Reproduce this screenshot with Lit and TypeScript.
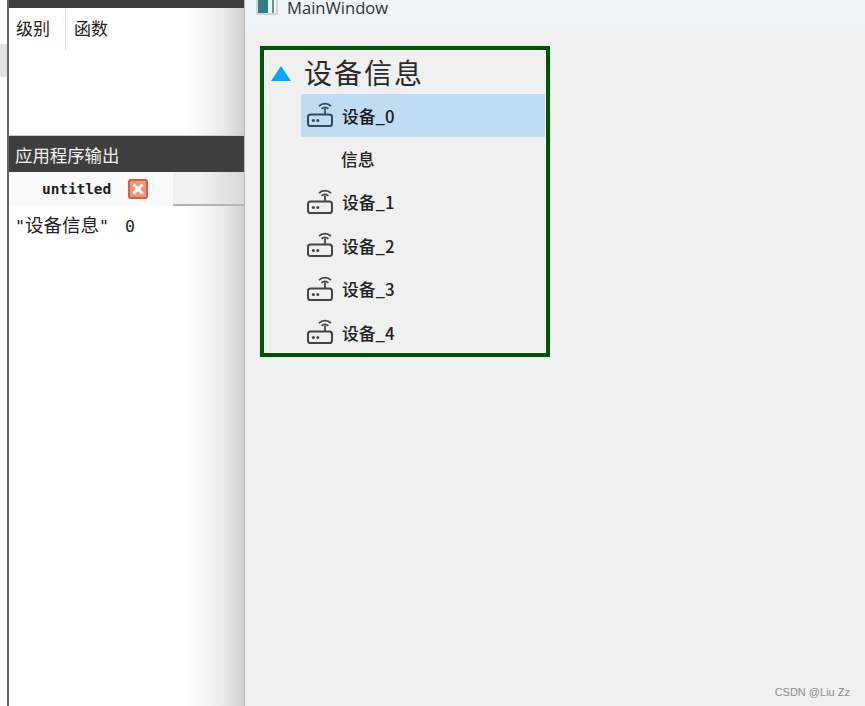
import { LitElement, html, css, svg } from "lit";
import { customElement } from "lit/decorators.js";

const router = svg`<svg class="ico" width="26" height="26" viewBox="0 0 26 26" fill="none" stroke="currentColor">
  <rect x="1" y="12.4" width="24" height="11.6" rx="2.6" stroke-width="2"/>
  <path d="M18 12V6.5" stroke-width="1.8"/>
  <path d="M14.6 6.8a4.8 4.8 0 0 1 6.8 0" stroke-width="1.8"/>
  <path d="M12 4.2a8.4 8.4 0 0 1 12 0" stroke-width="1.8"/>
  <circle cx="6.4" cy="18.4" r="1.5" fill="currentColor" stroke="none"/>
  <circle cx="10.8" cy="18.4" r="1.5" fill="currentColor" stroke="none"/>
</svg>`;

@customElement("app-root")
export class AppRoot extends LitElement {
  static styles = css`
    :host {
      display: flex;
      width: 865px;
      height: 706px;
      overflow: hidden;
      background: #fff;
      font-family: "Noto Sans CJK SC", "Liberation Sans", sans-serif;
      color: #1c1c1c;
      --shade: linear-gradient(to right, #fff 0, #fff 176px, #f6f6f6 196px, #e9e9e9 216px, #d0d0d0 235px);
    }
    .gutter { width: 7px; flex: none; padding-top: 44px; box-sizing: border-box; }
    .gutter i { display: block; width: 7px; height: 33px; background: #e2e2e2; }
    .left {
      width: 238px;
      flex: none;
      box-sizing: border-box;
      border-left: 2px solid #666;
      border-right: 1px solid #b9b9b9;
      display: flex;
      flex-direction: column;
      background: var(--shade);
    }
    .topbar { height: 8px; background: #3e3e3e; flex: none; }
    .cols { display: flex; height: 42px; font-size: 17px; line-height: 40px; flex: none; color: #222; }
    .cols .a { width: 57px; box-sizing: border-box; padding-left: 7px; border-right: 1px solid #e0e0e0; }
    .cols .b { padding-left: 8px; }
    .spacer { height: 85px; flex: none; border-bottom: 1px solid #ccc; }
    .outhead {
      height: 36px; flex: none; background: #3e3e3e; color: #f2f2f2;
      font-size: 17.4px; line-height: 38px; padding-left: 6px;
    }
    .tabs {
      height: 34px; flex: none; display: flex; box-sizing: border-box;
      background: linear-gradient(to right, #f1f1f1 0, #f1f1f1 190px, #d8d8d8 235px);
      border-bottom: 2px solid #b4b4b4;
    }
    .tab {
      width: 164px; height: 34px; box-sizing: border-box; background: #fafafa;
      display: flex; align-items: center; padding-left: 33px; gap: 17px;
      font-family: "DejaVu Sans Mono", "Liberation Mono", monospace;
      font-size: 14.5px; font-weight: 700; letter-spacing: -.1px; color: #222;
    }
    .close {
      width: 20px; height: 20px; flex: none; box-sizing: border-box;
      border: 2px solid #dd5b3e; border-radius: 3px; background: #ee9676;
      display: flex; align-items: center; justify-content: center;
    }
    .output {
      padding: 4px 0 0 6px;
      font-family: "DejaVu Sans Mono", monospace;
      font-size: 16.6px; line-height: 28px; color: #222;
      white-space: pre;
    }
    .output b { font-family: "Noto Sans CJK SC", sans-serif; font-size: 18.5px; font-weight: 400; }
    .output i { font-style: normal; margin-left: 6px; }
    .win { flex: 1; display: flex; flex-direction: column; background: #f0f0f0; position: relative; min-width: 0; }
    .title {
      height: 31px; flex: none; background: #eff4f9; display: flex; align-items: flex-start;
      padding-left: 11px; gap: 9px;
      font-family: "Open Sans", "Noto Sans", sans-serif; font-size: 16.6px; line-height: 16px; color: #333;
    }
    .appicon {
      width: 22px; height: 15px; box-sizing: border-box;
      background: linear-gradient(to right, #2f7f86 0 55%, #f2f2f2 55% 80%, #5a9a8c 80% 90%, #f2f2f2 90%);
      border: 2px solid #d4d4d4; border-top: none; border-radius: 0 0 2px 2px;
    }
    .panel {
      margin: 15px 0 0 15px;
      width: 290px; height: 311px; box-sizing: border-box;
      border: 4px solid #005500;
      outline: 1px solid #dfe8df;
      box-shadow: inset 0 0 0 1px #fafafa;
    }
    .head { height: 44px; display: flex; align-items: center; padding-left: 7px; }
    .tri { width: 0; height: 0; border-left: 10.5px solid transparent; border-right: 10.5px solid transparent; border-bottom: 15px solid #00aaff; margin-top: 2px; }
    .head span { margin-left: 13px; font-size: 28px; letter-spacing: 2px; line-height: 44px; color: #2a2a2a; font-weight: 400; }
    .row {
      margin-left: 37px; width: 244px; height: 43.4px; display: flex; align-items: center;
      padding-left: 6px; box-sizing: border-box; font-size: 16.8px; font-weight: 500; color: #222; gap: 9px;
    }
    .row.sel { background: #c0dcf2; border-radius: 2px 0 0 2px; color: #1a1a1a; }
    .row.sel .ico { color: #2c4a60; }
    .ico { color: #444; flex: none; margin-top: -1px; }
    .row.child { padding-left: 40px; }
    .wm {
      position: absolute; right: 15px; bottom: 8px; font-family: "Liberation Sans", sans-serif;
      font-size: 11px; color: #8e8e8e;
    }
  `;

  render() {
    const devices = [1, 2, 3, 4];
    return html`
      <div class="gutter"><i></i></div>
      <div class="left">
        <div class="topbar"></div>
        <div class="cols"><div class="a">级别</div><div class="b">函数</div></div>
        <div class="spacer"></div>
        <div class="outhead">应用程序输出</div>
        <div class="tabs">
          <div class="tab">untitled
            <span class="close"><svg width="12" height="12" viewBox="0 0 12 12"><path d="M1.5 1.5l9 9M10.5 1.5l-9 9" stroke="#fff" stroke-width="3"/></svg></span>
          </div>
        </div>
        <div class="output">"<b>设备信息</b>" <i>0</i></div>
      </div>
      <div class="win">
        <div class="title"><div class="appicon"></div><span>MainWindow</span></div>
        <div class="panel">
          <div class="head"><div class="tri"></div><span>设备信息</span></div>
          <div class="row sel">${router}<span>设备_0</span></div>
          <div class="row child"><span>信息</span></div>
          ${devices.map((d) => html`<div class="row">${router}<span>设备_${d}</span></div>`)}
        </div>
        <div class="wm">CSDN @Liu Zz</div>
      </div>
    `;
  }
}
